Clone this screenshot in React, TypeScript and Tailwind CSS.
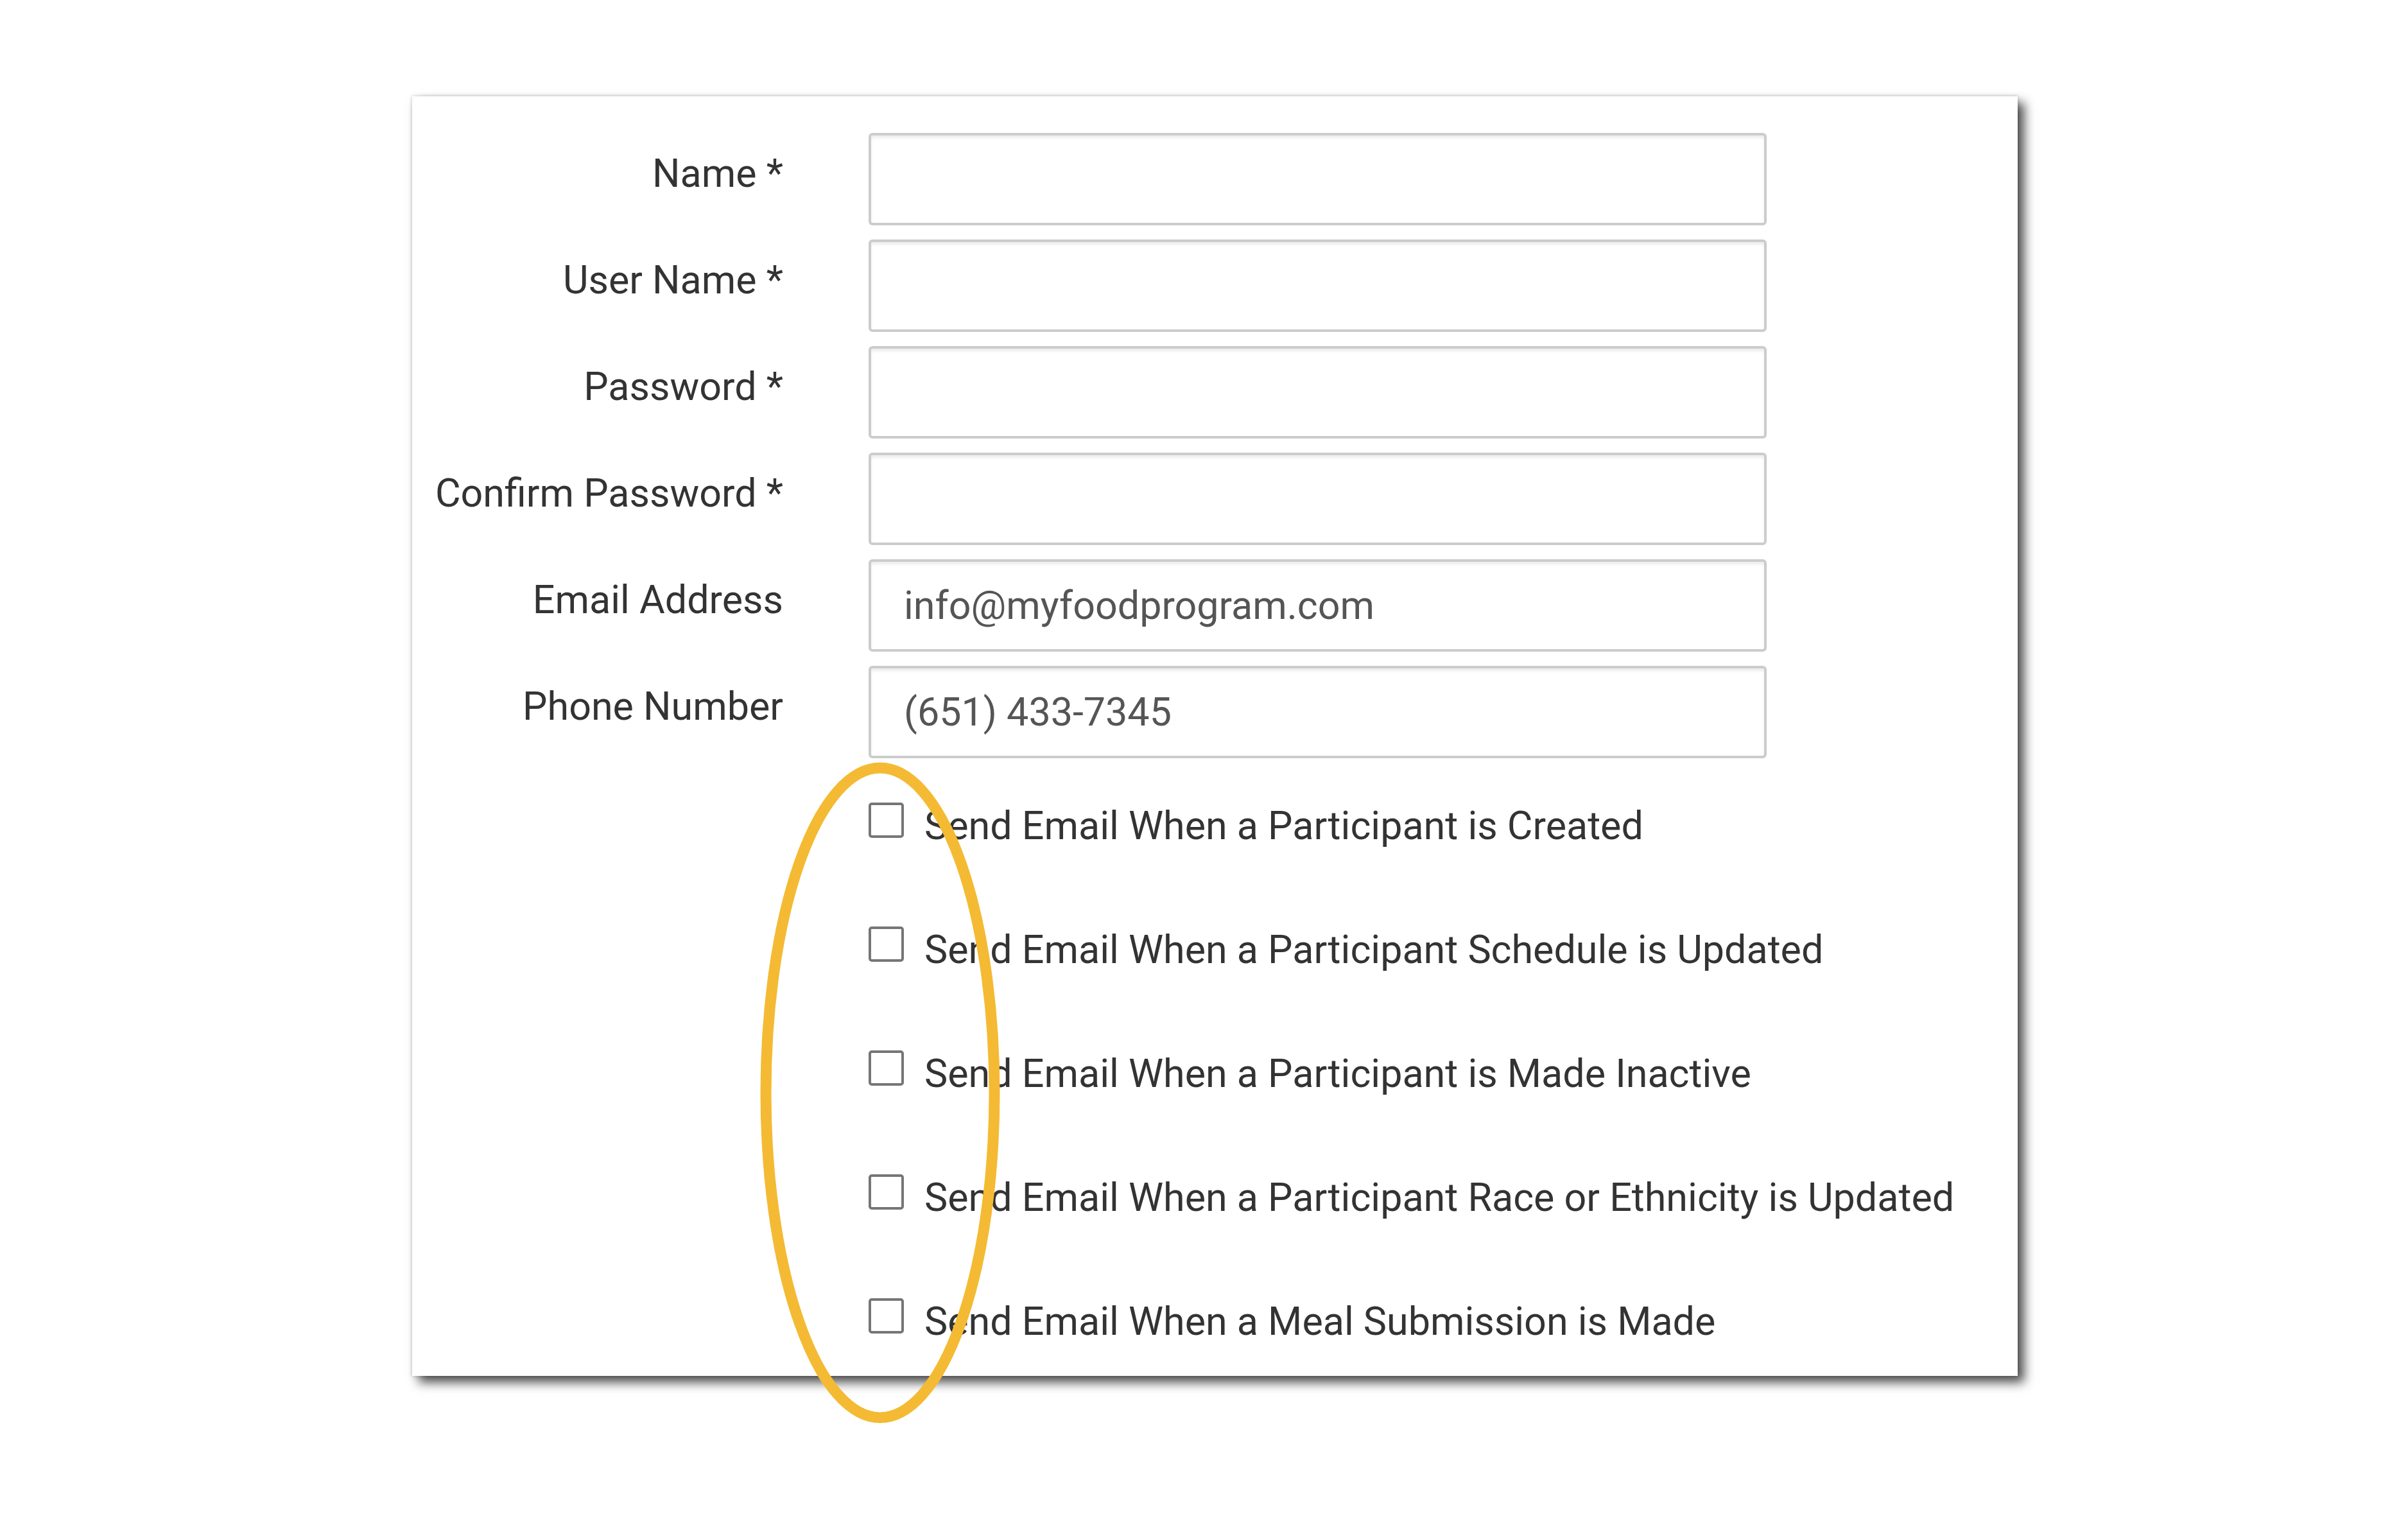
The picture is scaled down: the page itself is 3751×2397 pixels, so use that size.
import React from "react";

const FIELDS = [
  { label: "Name *", value: "" },
  { label: "User Name *", value: "" },
  { label: "Password *", value: "" },
  { label: "Confirm Password *", value: "" },
  { label: "Email Address", value: "info@myfoodprogram.com" },
  { label: "Phone Number", value: "(651) 433-7345" },
];

const NOTIFY = [
  "Send Email When a Participant is Created",
  "Send Email When a Participant Schedule is Updated",
  "Send Email When a Participant is Made Inactive",
  "Send Email When a Participant Race or Ethnicity is Updated",
  "Send Email When a Meal Submission is Made",
];

export default function App() {
  return (
    <div className="min-h-screen bg-white font-['Roboto',sans-serif] text-[#333]">
      <div className="pt-[150px] pl-[642px]">
        <div className="relative w-[2501px] bg-white pt-[57px] pb-[49px] shadow-[10px_10px_16px_rgba(0,0,0,0.7),0_0_5px_rgba(0,0,0,0.22)]">
          <div className="flex flex-col gap-[22px]">
            {FIELDS.map(({ label, value }) => (
              <div key={label} className="flex items-start">
                <label className="w-[578px] shrink-0 pt-[27px] text-right text-[61px] leading-[72px]">
                  {label}
                </label>
                <input
                  type="text"
                  defaultValue={value}
                  className="ml-[133px] w-[1399px] h-[144px] rounded-[6px] border-4 border-[#cccccc] bg-white pl-[51px] text-[61px] text-[#555] shadow-[inset_0_4px_4px_rgba(0,0,0,0.075)] outline-none font-['Roboto',sans-serif]"
                />
              </div>
            ))}
          </div>

          <div className="mt-[69px] pl-[711px] flex flex-col gap-[121px]">
            {NOTIFY.map((text) => (
              <label key={text} className="flex items-start">
                <input
                  type="checkbox"
                  className="appearance-none w-[55px] h-[55px] shrink-0 rounded-[5px] border-4 border-[#767676] bg-white"
                />
                <span className="ml-[32px] text-[61px] leading-[72px] whitespace-nowrap">{text}</span>
              </label>
            ))}
          </div>

          {/* highlight ring drawn over the checkboxes */}
          <svg
            className="pointer-events-none absolute left-[529px] top-[1027px]"
            width="400"
            height="1050"
            viewBox="0 0 400 1050"
          >
            <ellipse cx="200" cy="525" rx="178" ry="506" fill="none" stroke="#F4BA33" strokeWidth="17" />
          </svg>
        </div>
      </div>
    </div>
  );
}
